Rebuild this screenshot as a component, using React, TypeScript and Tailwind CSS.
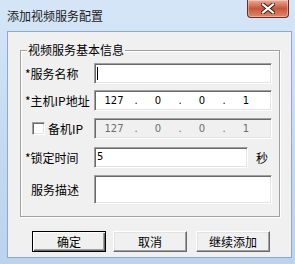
import React from "react";

const sunken =
  "bg-white border border-t-[#a0a0a0] border-l-[#a0a0a0] border-b-white border-r-white shadow-[inset_1px_1px_0_#696969,inset_-1px_-1px_0_#e3e3e3]";

function Btn({ label, def, className }: { label: string; def?: boolean; className?: string }) {
  return (
    <div
      className={
        "h-[21px] w-[74px] flex items-center justify-center text-[12px] leading-[14px] text-black bg-[#f0f0f0] " +
        (def
          ? "border border-black shadow-[inset_1px_1px_0_#ffffff,inset_-1px_-1px_0_#696969,inset_-2px_-2px_0_#a0a0a0] "
          : "border border-t-white border-l-white border-b-[#696969] border-r-[#696969] shadow-[inset_-1px_-1px_0_#a0a0a0,inset_1px_1px_0_#e3e3e3] ") +
        (className || "")
      }
    >
      {label}
    </div>
  );
}

function IpField({ disabled }: { disabled?: boolean }) {
  const segs = ["127", "0", "0", "1"];
  return (
    <div
      className={
        "w-[178px] h-[21px] flex items-center pl-[1px] font-['DejaVu_Sans',sans-serif] text-[10px] " +
        (disabled
          ? "bg-[#f0f0f0] border border-t-[#a0a0a0] border-l-[#a0a0a0] border-b-white border-r-white shadow-[inset_1px_1px_0_#696969,inset_-1px_-1px_0_#e3e3e3] text-[#6d6d6d]"
          : sunken + " text-black")
      }
    >
      {segs.map((s, i) => (
        <React.Fragment key={i}>
          <span className="w-[36px] text-center">{s}</span>
          {i < 3 && <span className="w-[8px] text-center">.</span>}
        </React.Fragment>
      ))}
    </div>
  );
}

export default function App() {
  return (
    <div className="w-[295px] h-[264px] overflow-hidden bg-gradient-to-b from-[#d6e6f8] via-[#c6daf1] to-[#bcd3ee] font-['Noto_Sans_CJK_SC',sans-serif] text-[12px] leading-[14px] text-black">
      {/* title bar */}
      <div className="h-[31px] flex items-start justify-between">
        <span className="ml-[7px] mt-[9px] text-[#1b1b1b]">添加视频服务配置</span>
        <div className="mr-[6px] w-[42px] h-[18px] rounded-b-[4px] border border-t-0 border-[#6e2a1d] bg-gradient-to-b from-[#e9ab97] via-[#c8563a] to-[#d98a6e] flex items-center justify-center shadow-[inset_0_0_0_1px_rgba(255,255,255,0.35)]">
          <svg width="14" height="11" viewBox="0 0 14 11">
            <path d="M2 1.5 L12 9.5 M12 1.5 L2 9.5" stroke="#3a1a14" strokeWidth="4" strokeLinecap="square" />
            <path d="M2 1.5 L12 9.5 M12 1.5 L2 9.5" stroke="#ffffff" strokeWidth="2.2" strokeLinecap="square" />
          </svg>
        </div>
      </div>
      {/* client */}
      <div className="ml-[7px] w-[285px] h-[227px] bg-[#f0f0f0] border border-[#8fa9c7]">
        {/* group box */}
        <div className="relative ml-[12px] mt-[18px] w-[260px] h-[167px] border border-[#a0a0a0] shadow-[inset_1px_1px_0_#ffffff,1px_1px_0_#ffffff]">
          <span className="absolute left-[6px] top-[-8px] px-[1px] bg-[#f0f0f0]">视频服务基本信息</span>
          <div className="flex flex-col pl-[4px] pt-[12px]">
            <div className="flex items-center h-[21px]">
              <span className="w-[69px]">*服务名称</span>
              <div className={sunken + " w-[178px] h-[21px] relative"}>
                <div className="absolute left-[2px] top-[3px] w-[1px] h-[13px] bg-black" />
              </div>
            </div>
            <div className="flex items-center h-[21px] mt-[6px]">
              <span className="w-[69px]">*主机IP地址</span>
              <IpField />
            </div>
            <div className="flex items-center h-[21px] mt-[7px]">
              <div className="w-[69px] flex items-center">
                <div className="ml-[7px] w-[13px] h-[13px] bg-white border border-t-[#a0a0a0] border-l-[#a0a0a0] border-b-white border-r-white shadow-[inset_1px_1px_0_#696969,inset_-1px_-1px_0_#e3e3e3]" />
                <span className="ml-[3px]">备机IP</span>
              </div>
              <IpField disabled />
            </div>
            <div className="flex items-center h-[21px] mt-[8px]">
              <span className="w-[69px]">*锁定时间</span>
              <div className={sunken + " w-[154px] h-[21px] pl-[2px] pt-[2px] font-['DejaVu_Sans',sans-serif] text-[10px]"}>5</div>
              <span className="ml-[8px]">秒</span>
            </div>
            <div className="flex items-center h-[29px] mt-[7px]">
              <span className="w-[69px] pl-[6px]">服务描述</span>
              <div className={sunken + " w-[178px] h-[29px]"} />
            </div>
          </div>
        </div>
        {/* buttons */}
        <div className="flex ml-[24px] mt-[14px]">
          <Btn label="确定" def />
          <Btn label="取消" className="ml-[7px]" />
          <Btn label="继续添加" className="ml-[9px]" />
        </div>
      </div>
    </div>
  );
}
